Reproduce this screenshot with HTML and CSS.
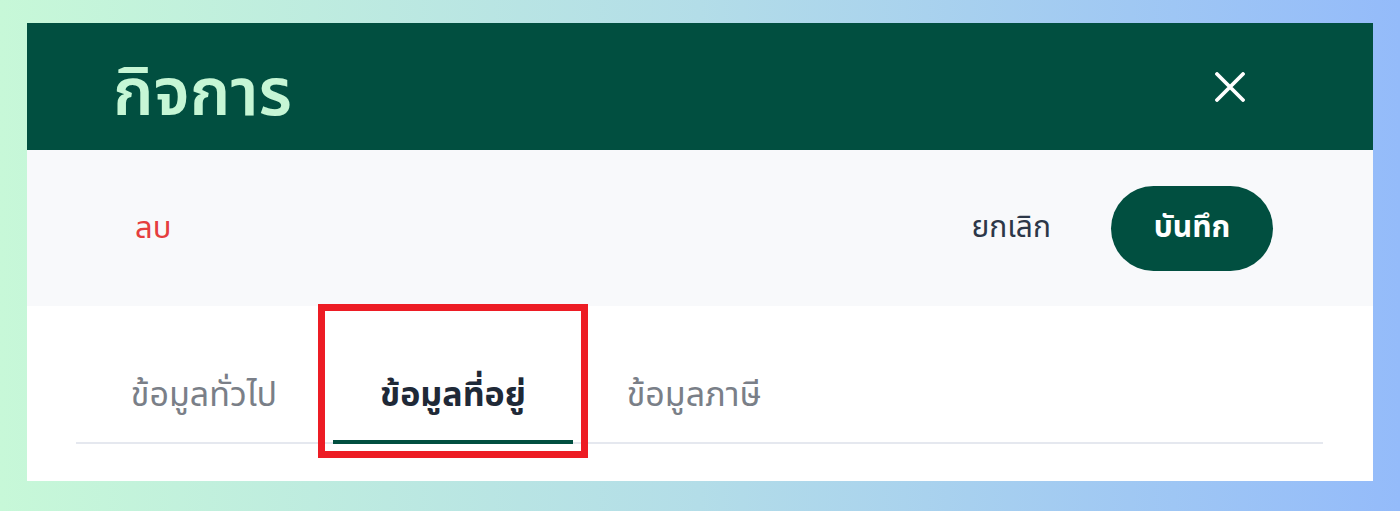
FILE: index.html
```html
<!DOCTYPE html>
<html lang="th">
<head>
<meta charset="utf-8">
<title>กิจการ</title>
<link rel="stylesheet" href="styles.css">
</head>
<body>
<div class="stage">
  <div class="card">
    <header class="header">
      <h1 class="title">กิจการ</h1>
      <button class="close" aria-label="ปิด">
        <svg viewBox="0 0 30 30" width="30" height="30"><path d="M2 2 L28 28 M28 2 L2 28" stroke="#ffffff" stroke-width="3.8" stroke-linecap="round" fill="none"/></svg>
      </button>
    </header>
    <div class="toolbar">
      <button class="btn-delete">ลบ</button>
      <div class="actions">
        <button class="btn-cancel">ยกเลิก</button>
        <button class="btn-save">บันทึก</button>
      </div>
    </div>
    <div class="tabs-area">
      <nav class="tabs">
        <div class="tab tab-general">ข้อมูลทั่วไป</div>
        <div class="tab tab-address active">ข้อมูลที่อยู่</div>
        <div class="tab tab-tax">ข้อมูลภาษี</div>
      </nav>
    </div>
  </div>
  <div class="highlight"></div>
</div>
</body>
</html>
```
FILE: styles.css
```css
* { box-sizing: border-box; }
html, body { margin: 0; padding: 0; }
body {
  width: 1400px;
  height: 511px;
  overflow: hidden;
  background: linear-gradient(90deg, #c7f8d8 0%, #b3dde8 50%, #94bbfa 100%);
  font-family: "Noto Sans", "Noto Sans Thai", "DejaVu Sans", sans-serif;
}
.stage {
  position: relative;
  padding: 23px 27px 30px 27px;
}
.card {
  width: 1346px;
  height: 458px;
  background: #ffffff;
  display: flex;
  flex-direction: column;
}
.header {
  height: 127px;
  background: #014f40;
  display: flex;
  align-items: center;
  justify-content: space-between;
  padding: 0 128px 0 86px;
}
.title {
  margin: 0;
  color: #c6f6d5;
  font-size: 66px;
  font-weight: 600;
  line-height: 1;
  padding-top: 4px;
}
.close {
  background: none;
  border: 0;
  padding: 0;
  width: 30px;
  height: 30px;
  display: flex;
}
.toolbar {
  height: 156px;
  background: #f8f9fb;
  display: flex;
  align-items: center;
  justify-content: space-between;
  padding: 0 100px 0 108px;
}
.actions {
  display: flex;
  align-items: center;
  gap: 60px;
}
button {
  font-family: inherit;
  cursor: pointer;
}
.btn-delete {
  background: none;
  border: 0;
  padding: 0;
  color: #e53e3e;
  font-size: 31px;
}
.btn-cancel {
  background: none;
  border: 0;
  padding: 0;
  color: #2d3748;
  font-size: 30px;
}
.btn-save {
  width: 162px;
  height: 85px;
  border: 0;
  border-radius: 43px;
  background: #014f40;
  color: #ffffff;
  font-size: 30px;
  font-weight: 700;
}
.tabs-area {
  flex: 1;
  padding: 0 50px 37px 49px;
  display: flex;
  flex-direction: column;
  justify-content: flex-end;
}
.tabs {
  display: flex;
  gap: 3px;
  padding-left: 2px;
  border-bottom: 2px solid #e5e8ef;
}
.tab {
  padding: 0 0 22px 0;
  font-size: 34px;
  color: #7a7f88;
  line-height: 50px;
  text-align: center;
  border-bottom: 4px solid transparent;
  margin-bottom: -2px;
}
.tab-general { width: 252px; }
.tab-address { width: 240px; }
.tab-tax { width: 236px; }
.tab.active {
  color: #1f2937;
  font-weight: 700;
  border-bottom-color: #014f40;
}
.highlight {
  position: absolute;
  left: 318px;
  top: 304px;
  width: 270px;
  height: 154px;
  border: 7px solid #ed1c24;
}
```
